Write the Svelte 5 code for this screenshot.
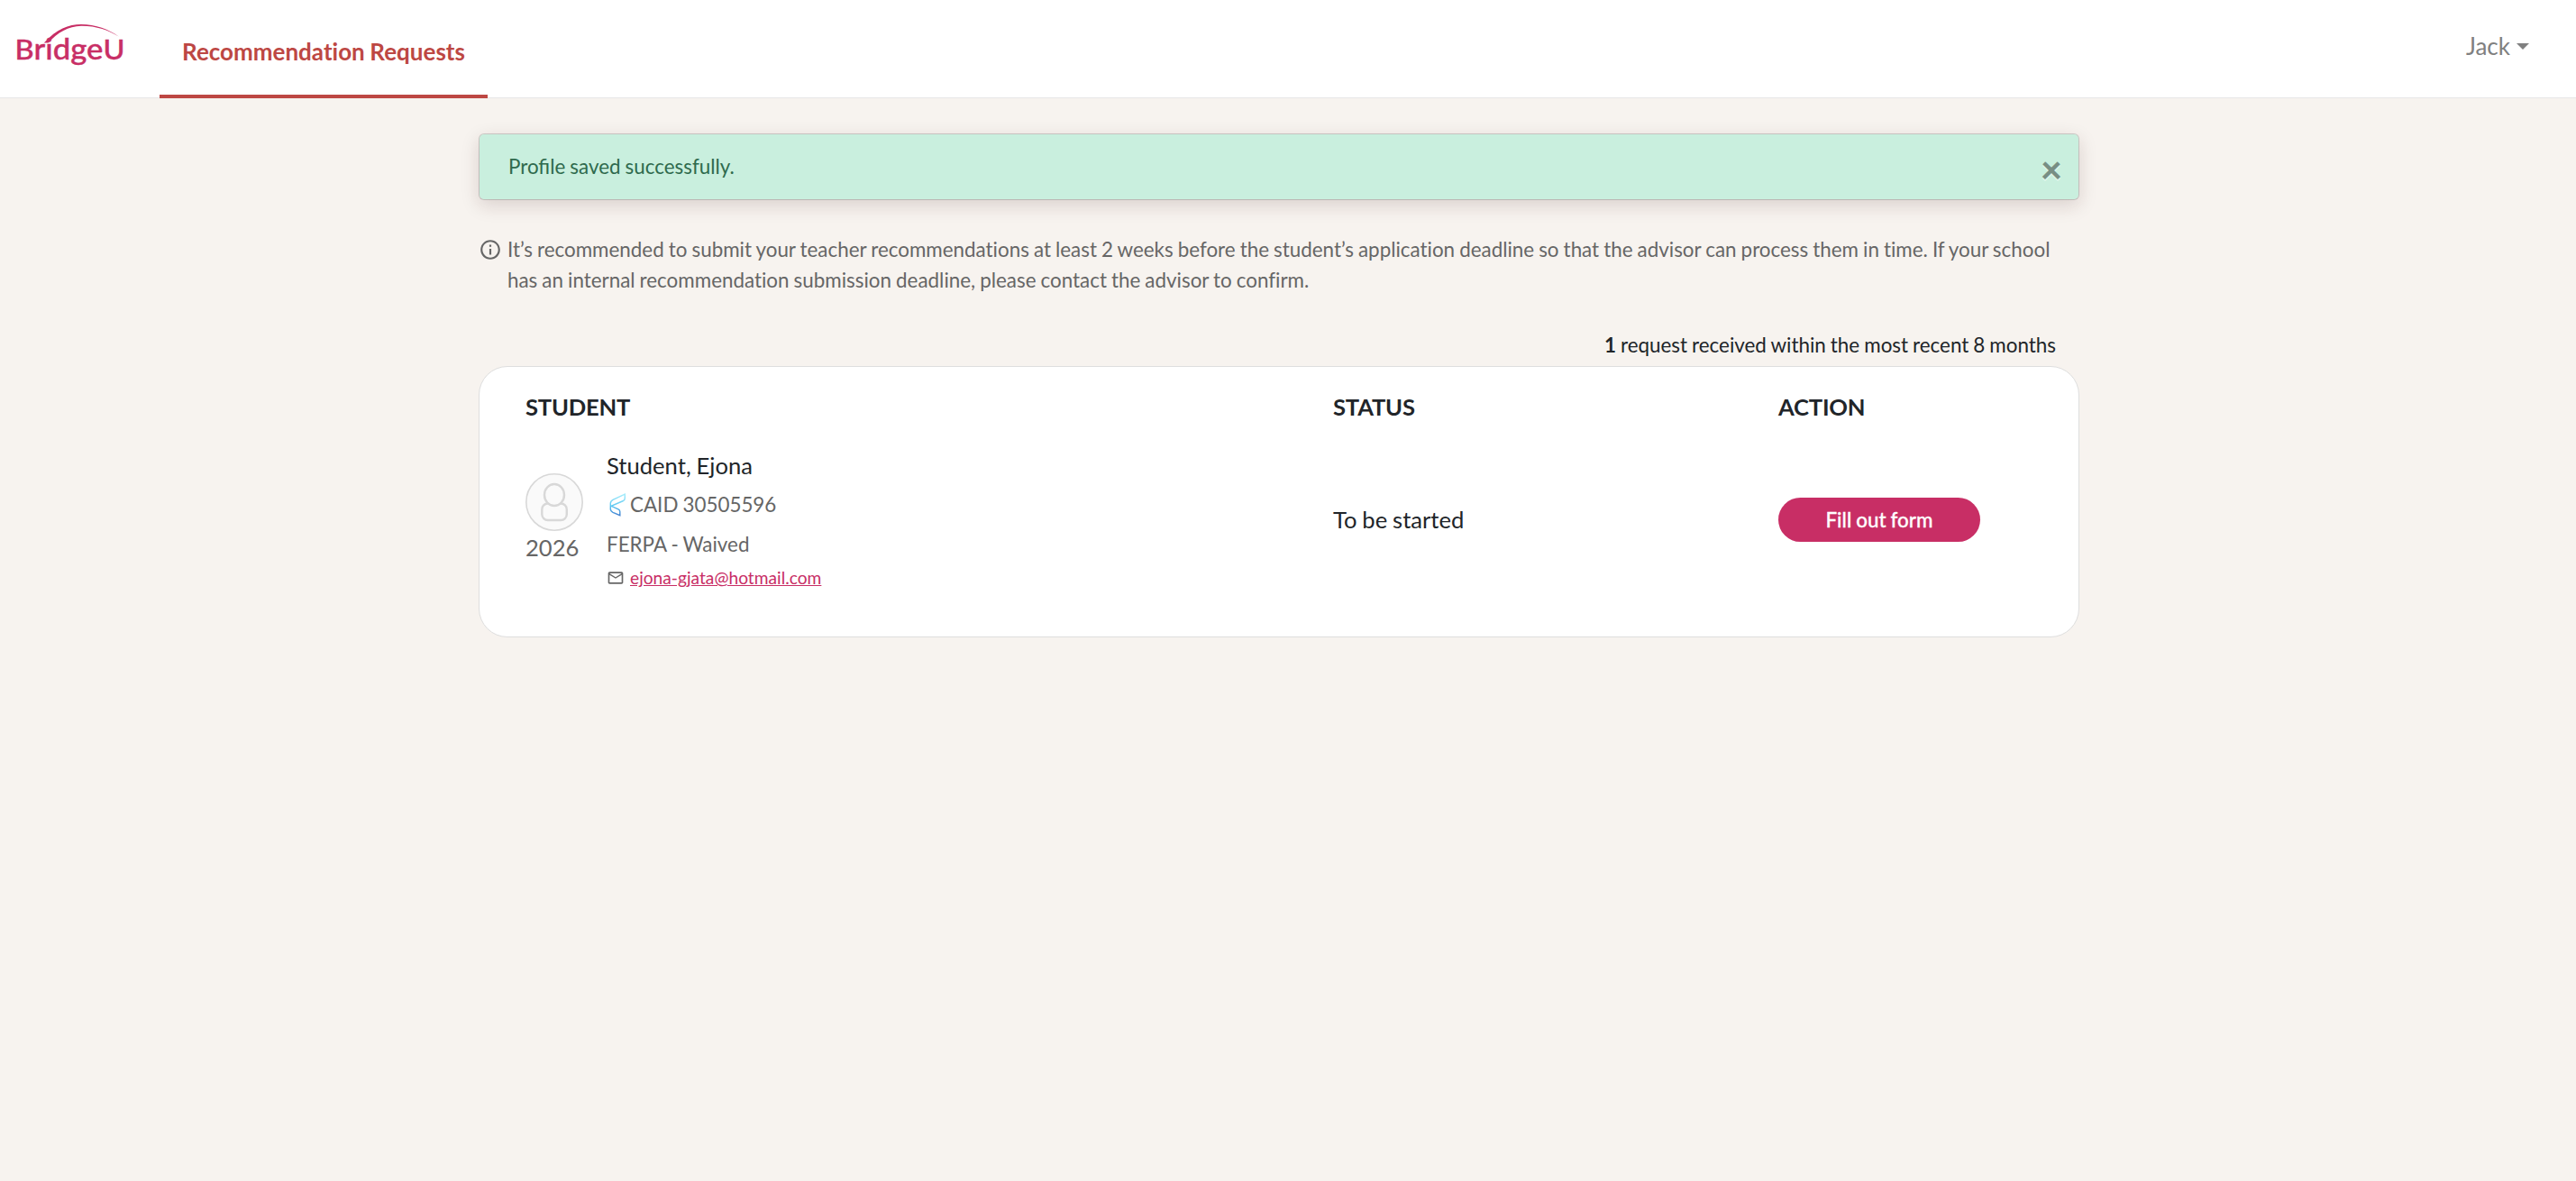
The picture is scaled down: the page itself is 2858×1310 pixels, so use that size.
<script lang="ts">
  interface RecommendationRequest {
    name: string;
    year: number;
    caid: string;
    ferpa: string;
    email: string;
    status: string;
    action: string;
  }

  let userName = 'Jack';
  let showAlert = $state(true);

  const requests: RecommendationRequest[] = [
    {
      name: 'Student, Ejona',
      year: 2026,
      caid: '30505596',
      ferpa: 'Waived',
      email: 'ejona-gjata@hotmail.com',
      status: 'To be started',
      action: 'Fill out form',
    },
  ];
</script>

<header class="navbar">
  <svg class="logo" viewBox="0 0 122 60" width="122" height="60">
    <text x="-1.500" y="46.200" textLength="122" lengthAdjust="spacingAndGlyphs">B<tspan class="lower">ridge</tspan>U</text>
    <path d="M30.800 27.500C45 12 58 7 72 7C88 7 103 12.500 114 20.800C103 13.400 88 8.500 72 8.700C58 8.900 46 16 35.500 27.500Z" />
  </svg>
  <a class="tab" href="#requests">Recommendation Requests</a>
  <button class="user">{userName}<span class="caret"></span></button>
</header>

<main class="page">
  {#if showAlert}
    <div class="alert">
      <span>Profile saved successfully.</span>
      <button class="close" aria-label="Close" onclick={() => (showAlert = false)}>×</button>
    </div>
  {/if}

  <div class="info">
    <svg viewBox="0 0 24 24" width="26" height="26">
      <path d="M11 7h2v2h-2zm0 4h2v6h-2zm1-9C6.480 2 2 6.480 2 12s4.480 10 10 10 10-4.480 10-10S17.520 2 12 2zm0 18c-4.410 0-8-3.590-8-8s3.590-8 8-8 8 3.590 8 8-3.590 8-8 8z" />
    </svg>
    <p>
      It’s recommended to submit your teacher recommendations at least 2 weeks before the student’s application deadline so that the advisor can process them in time. If your school has an internal recommendation submission deadline, please contact the advisor to confirm.
    </p>
  </div>

  <div class="count"><b>{requests.length}</b> request received within the most recent 8 months</div>

  <section class="card" id="requests">
    <div class="row head">
      <div>STUDENT</div>
      <div>STATUS</div>
      <div>ACTION</div>
    </div>
    {#each requests as r}
      <div class="row">
        <div class="student">
          <div class="avatar">
            <svg viewBox="0 0 64 64" width="64" height="64">
              <circle cx="32" cy="32" r="31.200" fill="#fafafa" stroke-width="1.600" />
              <rect x="18.300" y="33.500" width="27.500" height="18.500" rx="6.500" stroke-width="2.400" />
              <ellipse cx="32" cy="24" rx="11" ry="12" fill="#fafafa" stroke-width="2.400" />
            </svg>
            <span>{r.year}</span>
          </div>
          <div class="details">
            <div class="name">{r.name}</div>
            <div class="line">
              <svg class="caid" viewBox="0 0 25 26" width="25" height="26">
                <defs>
                  <linearGradient id="caid-stroke" x1="0" y1="0" x2="0" y2="1">
                    <stop offset="0" stop-color="#a5ecfb" />
                    <stop offset="0.550" stop-color="#5cc8f2" />
                    <stop offset="1" stop-color="#3f7fd0" />
                  </linearGradient>
                </defs>
                <path d="M20.300 1.200L7 7.300Q4.300 8.700 4.300 11.500V14.600L18.500 8.500Q20.300 7.500 20.300 5.500ZM4.300 14.600V17.500Q4.300 20 7 21.300L14.800 24.600V20.500Q14.800 18.600 13 17.800L5.300 14.300" />
              </svg>CAID {r.caid}
            </div>
            <div class="line">FERPA - {r.ferpa}</div>
            <div class="mail">
              <svg viewBox="0 0 24 24" width="20" height="20">
                <path d="M22 6c0-1.100-.9-2-2-2H4c-1.100 0-2 .9-2 2v12c0 1.100.9 2 2 2h16c1.100 0 2-.9 2-2V6zm-2 0l-8 5-8-5h16zm0 12H4V8l8 5 8-5v10z" />
              </svg>
              <a href="mailto:{r.email}">{r.email}</a>
            </div>
          </div>
        </div>
        <div class="status">{r.status}</div>
        <div><button class="fill">{r.action}</button></div>
      </div>
    {/each}
  </section>
</main>

<style>
  :global(body) {
    background: #f7f3ef;
    color: #212529;
    font-family: Lato, "Liberation Sans", sans-serif;
    font-size: 22.4px;
    line-height: 34px;
    font-variant-ligatures: none;
    word-spacing: -.7px;
  }
  button {
    padding: 0;
    border: 0;
    background: none;
    font-family: inherit;
    word-spacing: inherit;
    cursor: pointer;
  }

  .navbar {
    display: flex;
    align-items: flex-start;
    box-sizing: border-box;
    height: 109px;
    padding: 0 52px 0 18px;
    background: #fff;
    border-bottom: 1px solid #e7e7e7;
  }
  .logo { margin: 20px 37px 0 0; fill: #c82e65; }
  .logo text { font-size: 30px; font-weight: 500; stroke: #c82e65; stroke-width: .4; }
  .logo .lower { font-size: 32px; }
  .tab {
    box-sizing: border-box;
    width: 364px;
    height: 109px;
    padding-top: 40px;
    border-bottom: 4px solid #bd4743;
    color: #bd4743;
    font-size: 26px;
    font-weight: 700;
    text-align: center;
    text-decoration: none;
  }
  .user {
    display: flex;
    align-items: center;
    gap: 7px;
    margin: 34px 0 0 auto;
    color: #808080;
    font-size: 26px;
    line-height: 34px;
  }
  .caret { border: 7px solid transparent; border-top-color: currentColor; border-bottom: 0; }

  .page { width: 1776px; margin: 0 auto; padding: 39px 20px 0 0; }
  .alert {
    display: flex;
    align-items: center;
    justify-content: space-between;
    box-sizing: border-box;
    height: 74px;
    padding: 0 18px 0 32px;
    border: 1px solid rgba(0, 0, 0, .16);
    border-radius: 6px;
    background: #c9efde;
    background-clip: padding-box;
    box-shadow: 0 6px 20px rgba(60, 20, 20, .15);
    color: #2f6a4d;
    font-variant-ligatures: normal;
  }
  .close {
    margin-top: 4px;
    color: #000;
    font-size: 42px;
    font-weight: 900;
    line-height: 42px;
    opacity: .4;
    text-shadow: 0 2px 0 #fff;
  }

  .info { display: flex; gap: 6px; margin-top: 38px; color: #666; }
  .info svg { flex: none; margin-top: 4px; fill: #666; }
  .info p { width: 1722px; margin: 0; }
  .count { margin-top: 38px; padding-right: 26px; text-align: right; }

  .card {
    box-sizing: border-box;
    height: 301px;
    margin-top: 6px;
    padding: 27px 51px;
    border: 1px solid #dedede;
    border-radius: 32px;
    background: #fff;
  }
  .row { display: grid; grid-template-columns: 896px 494px 1fr; align-items: center; }
  .head { margin-bottom: 31px; font-size: 25.6px; font-weight: 700; letter-spacing: -.2px; }
  .student { display: flex; align-items: center; gap: 26px; }
  .avatar {
    display: flex;
    flex-direction: column;
    width: 64px;
    margin-bottom: 3px;
    font-size: 25.6px;
    color: #666;
  }
  .avatar svg { fill: none; stroke: #d8d8d8; }
  .avatar span { margin-top: 1px; }
  .name { font-size: 25.6px; }
  .line { display: flex; align-items: center; margin-top: 10px; color: #666; }
  .caid { margin-right: 1px; fill: none; stroke: url(#caid-stroke); stroke-width: 1.4; }
  .mail { display: flex; align-items: center; gap: 6px; margin-top: 8px; font-size: 19.2px; line-height: 24px; }
  .mail svg { fill: #666; }
  .mail a { color: #c82e65; }
  .status { font-size: 25.6px; }
  .fill {
    width: 224px;
    height: 49px;
    border-radius: 25px;
    background: #c82e65;
    color: #fff;
    font-size: 22.4px;
    font-weight: 500;
    -webkit-text-stroke: .3px #fff;
  }
</style>
